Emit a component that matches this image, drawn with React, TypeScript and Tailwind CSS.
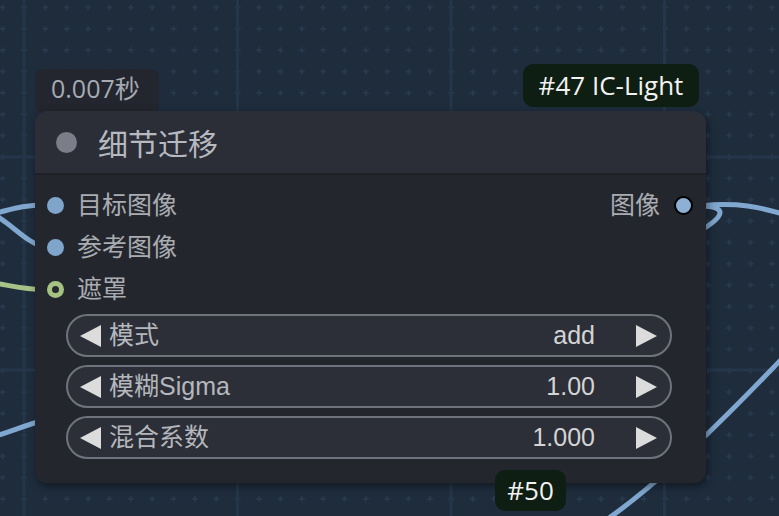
import React from "react";

function LeftArrow() {
  return (
    <svg width="21" height="22" viewBox="0 0 21 22" className="shrink-0">
      <polygon points="21,0 21,22 0,11" fill="#dcdcdc" />
    </svg>
  );
}
function RightArrow() {
  return (
    <svg width="21" height="22" viewBox="0 0 21 22" className="shrink-0">
      <polygon points="0,0 0,22 21,11" fill="#dcdcdc" />
    </svg>
  );
}

function Widget({ label, value }: { label: string; value: string }) {
  return (
    <div className="h-[43px] rounded-full border-2 border-[#6f737c] bg-[#2c2f38] flex items-center pl-[12px] pr-[13px]">
      <LeftArrow />
      <span className="ml-[8px] text-[#b4b7bc] leading-none">{label}</span>
      <span className="ml-auto text-[#d4d4d4] leading-none">{value}</span>
      <span className="ml-[41px] flex">
        <RightArrow />
      </span>
    </div>
  );
}

function InputRow({ label, kind }: { label: string; kind: "blue" | "green" }) {
  return (
    <div className="h-[42px] flex items-center pl-[12px] gap-[13px]">
      {kind === "blue" ? (
        <span className="w-[17px] h-[17px] rounded-full bg-[#7fa5cb] shrink-0" />
      ) : (
        <span className="w-[17px] h-[17px] rounded-full bg-[#a6c283] shrink-0 flex items-center justify-center">
          <span className="w-[7px] h-[7px] rounded-full bg-[#25272e]" />
        </span>
      )}
      <span className="text-[#a9acb1] leading-none">{label}</span>
    </div>
  );
}

export default function App() {
  const minor = 21.37;
  return (
    <div className="relative w-[779px] h-[516px] overflow-hidden bg-[#1e2c3c] font-['Liberation_Sans','Noto_Sans_CJK_SC',sans-serif] text-[25px]">
      {/* grid canvas */}
      <svg className="absolute inset-0" width="779" height="516">
        <defs>
          <pattern
            id="plus"
            patternUnits="userSpaceOnUse"
            x={24 - minor / 2}
            y={157 - minor / 2}
            width={minor}
            height={minor}
          >
            <rect x={minor / 2 - 3} y={minor / 2 - 0.8} width="6" height="1.6" fill="#283a4d" />
            <rect x={minor / 2 - 0.8} y={minor / 2 - 3} width="1.6" height="6" fill="#283a4d" />
          </pattern>
        </defs>
        <rect x="0" y="0" width="779" height="516" fill="url(#plus)" />
        {[24, 237.5, 451, 664.5].map((x) => (
          <rect key={x} x={x - 1.5} y="0" width="3" height="516" fill="#25364a" />
        ))}
        {[157, 370].map((y) => (
          <rect key={y} x="0" y={y - 1.5} width="779" height="3" fill="#25364a" />
        ))}
        {/* wires */}
        <g fill="none" strokeWidth="5" strokeLinecap="round">
          <path d="M -20 216 C 5 213, 15 205, 45 205" stroke="#80a7cf" />
          <path d="M -20 210 C 5 214, 20 240, 45 248" stroke="#80a7cf" />
          <path d="M -20 281 C 5 284, 20 289, 45 290" stroke="#a8c387" />
          <path d="M -20 441 C 5 434, 25 425, 45 420" stroke="#80a7cf" />
          <path d="M 700 206 C 735 202, 760 206, 795 218" stroke="#80a7cf" />
          <path d="M 700 206 C 728 206, 726 216, 698 232" stroke="#80a7cf" />
          <path d="M 585 534 C 640 500, 700 445, 795 345" stroke="#80a7cf" />
        </g>
      </svg>

      {/* timing badge */}
      <div className="absolute left-[35px] top-[69px] w-[124px] h-[44px] rounded-[8px] bg-[#23262e] pl-[16px] pt-[2px] font-['Open_Sans','Noto_Sans_CJK_SC',sans-serif] text-[#a6abb3] text-[25px] leading-[34px]">
        0.007秒
      </div>

      {/* node */}
      <div className="absolute left-[35px] top-[111px] w-[671px] h-[372px] rounded-[12px] bg-[#24262e] shadow-[2px_3px_8px_rgba(0,0,0,0.45)] flex flex-col">
        <div className="h-[64px] shrink-0 flex items-center pl-[21px] gap-[21px] bg-[#2b2e37] rounded-t-[12px] border-b-2 border-[#1f2127]">
          <span className="w-[21px] h-[21px] rounded-full bg-[#7b7e88] shrink-0" />
          <span className="text-[30px] text-[#b6b9c0] leading-none font-['Noto_Sans_CJK_SC',sans-serif]">细节迁移</span>
        </div>
        <div className="pt-[9px] flex">
          <div className="flex flex-col flex-1">
            <InputRow label="目标图像" kind="blue" />
            <InputRow label="参考图像" kind="blue" />
            <InputRow label="遮罩" kind="green" />
          </div>
          <div className="h-[42px] flex items-center pr-[13px] gap-[14px]">
            <span className="text-[#a9acb1] leading-none">图像</span>
            <span className="w-[19px] h-[19px] rounded-full bg-[#8db0d5] border-2 border-black shrink-0" />
          </div>
        </div>
        <div className="mt-[4px] ml-[31px] w-[606px] flex flex-col gap-[8px]">
          <Widget label="模式" value="add" />
          <Widget label="模糊Sigma" value="1.00" />
          <Widget label="混合系数" value="1.000" />
        </div>
      </div>

      {/* id badges */}
      <div className="absolute left-[523px] top-[64px] h-[43px] w-[176px] rounded-[10px] bg-[#0f1e12] flex items-center justify-center pb-[2px] font-['Open_Sans','Noto_Sans_CJK_SC',sans-serif] text-[26px] text-[#f2f2f2] leading-none">
        #47 IC-Light
      </div>
      <div className="absolute left-[495px] top-[470px] h-[41px] w-[71px] rounded-[10px] bg-[#0f1e12] flex items-center justify-center pb-[2px] font-['Open_Sans','Noto_Sans_CJK_SC',sans-serif] text-[26px] text-[#f2f2f2] leading-none">
        #50
      </div>
    </div>
  );
}
